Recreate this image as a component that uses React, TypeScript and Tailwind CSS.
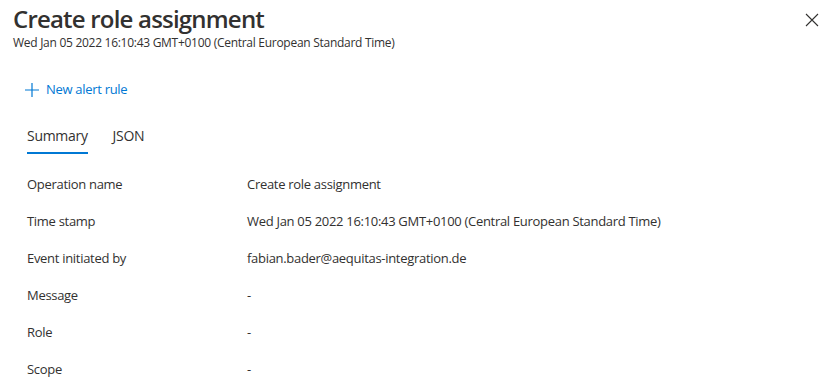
const rows = [
  { label: "Operation name", value: "Create role assignment" },
  { label: "Time stamp", value: "Wed Jan 05 2022 16:10:43 GMT+0100 (Central European Standard Time)" },
  { label: "Event initiated by", value: "fabian.bader@aequitas-integration.de" },
  { label: "Message", value: "-" },
  { label: "Role", value: "-" },
  { label: "Scope", value: "-" },
]

export default function App() {
  return (
    <div
      className="w-[836px] h-[392px] overflow-hidden bg-white text-[#323130]"
      style={{ fontFamily: '"Open Sans", "Noto Sans", sans-serif' }}
    >
      <div className="flex items-start justify-between pl-[13px] pr-[17px] pt-[3px]">
        <div>
          <h1 className="text-[24px] leading-[32px] font-semibold tracking-[-0.8px] text-[#323130]">
            Create role assignment
          </h1>
          <div className="text-[12px] leading-[16px] tracking-[-0.28px] text-[#323130]">
            Wed Jan 05 2022 16:10:43 GMT+0100 (Central European Standard Time)
          </div>
        </div>
        <button className="mt-[10px] text-[#323130]">
          <svg width="14" height="14" viewBox="0 0 14 14" fill="none" stroke="currentColor" strokeWidth="1.1">
            <path d="M1 1 L13 13 M13 1 L1 13" />
          </svg>
        </button>
      </div>

      <div className="pl-[24px] mt-[29px]">
        <button className="flex items-center gap-[6px] text-[13px] tracking-[-0.3px] text-[#0078d4]">
          <svg width="16" height="16" viewBox="0 0 16 16" fill="none" stroke="currentColor" strokeWidth="1.2">
            <path d="M8 1 V15 M1 8 H15" />
          </svg>
          <span>New alert rule</span>
        </button>
      </div>

      <div className="pl-[27px] mt-[26px] flex gap-[25px] text-[14px] tracking-[-0.3px]">
        <div className="flex flex-col">
          <span className="leading-[20px]">Summary</span>
          <span className="mt-[6px] h-[2px] bg-[#0078d4]" />
        </div>
        <span className="leading-[20px]">JSON</span>
      </div>

      <div className="pl-[27px] mt-[13px] flex flex-col text-[13px] tracking-[-0.3px]">
        {rows.map((r) => (
          <div key={r.label} className="flex h-[37px] items-center">
            <div className="w-[220px]">{r.label}</div>
            <div>{r.value}</div>
          </div>
        ))}
      </div>
    </div>
  )
}
